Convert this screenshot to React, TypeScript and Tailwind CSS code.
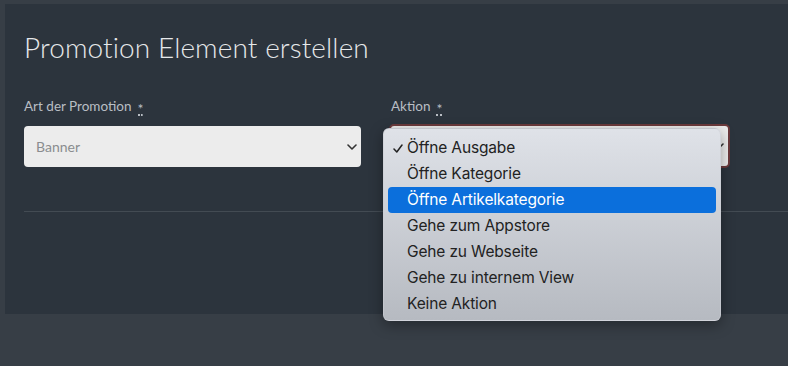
import React from 'react';

const options = [
  'Öffne Ausgabe',
  'Öffne Kategorie',
  'Öffne Artikelkategorie',
  'Gehe zum Appstore',
  'Gehe zu Webseite',
  'Gehe zu internem View',
  'Keine Aktion',
];

const Chevron: React.FC<{ className?: string }> = ({ className }) => (
  <svg width="10" height="6" viewBox="0 0 10 6" className={className} aria-hidden="true">
    <path d="M1 1l4 4 4-4" fill="none" stroke="#333" strokeWidth="1.6" strokeLinecap="round" strokeLinejoin="round" />
  </svg>
);

const Required = () => (
  <abbr
    className="ml-[6px] no-underline border-b-2 border-dotted border-[#b9bec4] leading-[12px] h-[13px] text-[14px] flex items-start"
    title="required"
  >
    *
  </abbr>
);

export default function App() {
  const selected = 0;
  const active = 2;

  return (
    <div className="w-[788px] h-[366px] bg-[#373e46] pl-[5px] pt-[4px] overflow-hidden font-['Lato',sans-serif]">
      <div className="h-[310px] bg-[#2c343d] pl-[19px] pt-[26px]">
        <h1 className="text-[28px] font-light leading-[34px] text-[#e6e8ea] tracking-[0.1px]">
          Promotion Element erstellen
        </h1>

        <div className="mt-[36px] flex gap-[28px]">
          <div className="w-[337px]">
            <label className="flex items-end h-[16px] text-[13.5px] text-[#b9bec4]">
              Art der Promotion
              <Required />
            </label>
            <div className="mt-[10px] h-[41px] rounded-[4px] bg-[#ececec] flex items-center justify-between pl-[12px] pr-[4px]">
              <span className="text-[14px] text-[#8a8c8f]">Banner</span>
              <Chevron />
            </div>
          </div>

          <div className="relative w-[341px]">
            <label className="flex items-end h-[16px] pl-[2px] text-[13.5px] text-[#b9bec4]">
              Aktion
              <Required />
            </label>
            <div className="mt-[8px] h-[44px] rounded-[5px] border-2 border-[#6b3a3c] bg-[#ececec] flex items-center justify-end pr-[4px]">
              <Chevron />
            </div>

            <div className="absolute left-[-6px] top-[28px] w-[338px] h-[193px] rounded-[6px] bg-gradient-to-b from-[#dfe2e8] to-[#b6bac1] shadow-[0_4px_14px_rgba(0,0,0,0.35)] border border-[#c9ccd2]/60 pt-[6px] px-[4px] font-['Inter',sans-serif]">
              {options.map((o, i) => (
                <div
                  key={o}
                  className={
                    i === active
                      ? 'relative h-[26px] rounded-[4px] bg-[#0b6fdc] text-white flex items-center pl-[19px] text-[15.5px] tracking-[-0.15px]'
                      : 'relative h-[26px] flex items-center pl-[19px] text-[15.5px] tracking-[-0.15px] text-[#222]'
                  }
                >
                  {i === selected && (
                    <svg width="10" height="9" viewBox="0 0 10 9" className="absolute left-[5px] top-[9px]" aria-hidden="true">
                      <path d="M1 5l2.8 3L9 1" fill="none" stroke="#222" strokeWidth="1.5" strokeLinecap="round" strokeLinejoin="round" />
                    </svg>
                  )}
                  {o}
                </div>
              ))}
            </div>
          </div>
        </div>

        <div className="mt-[43px] h-px bg-[#434b53]" />
      </div>
    </div>
  );
}
